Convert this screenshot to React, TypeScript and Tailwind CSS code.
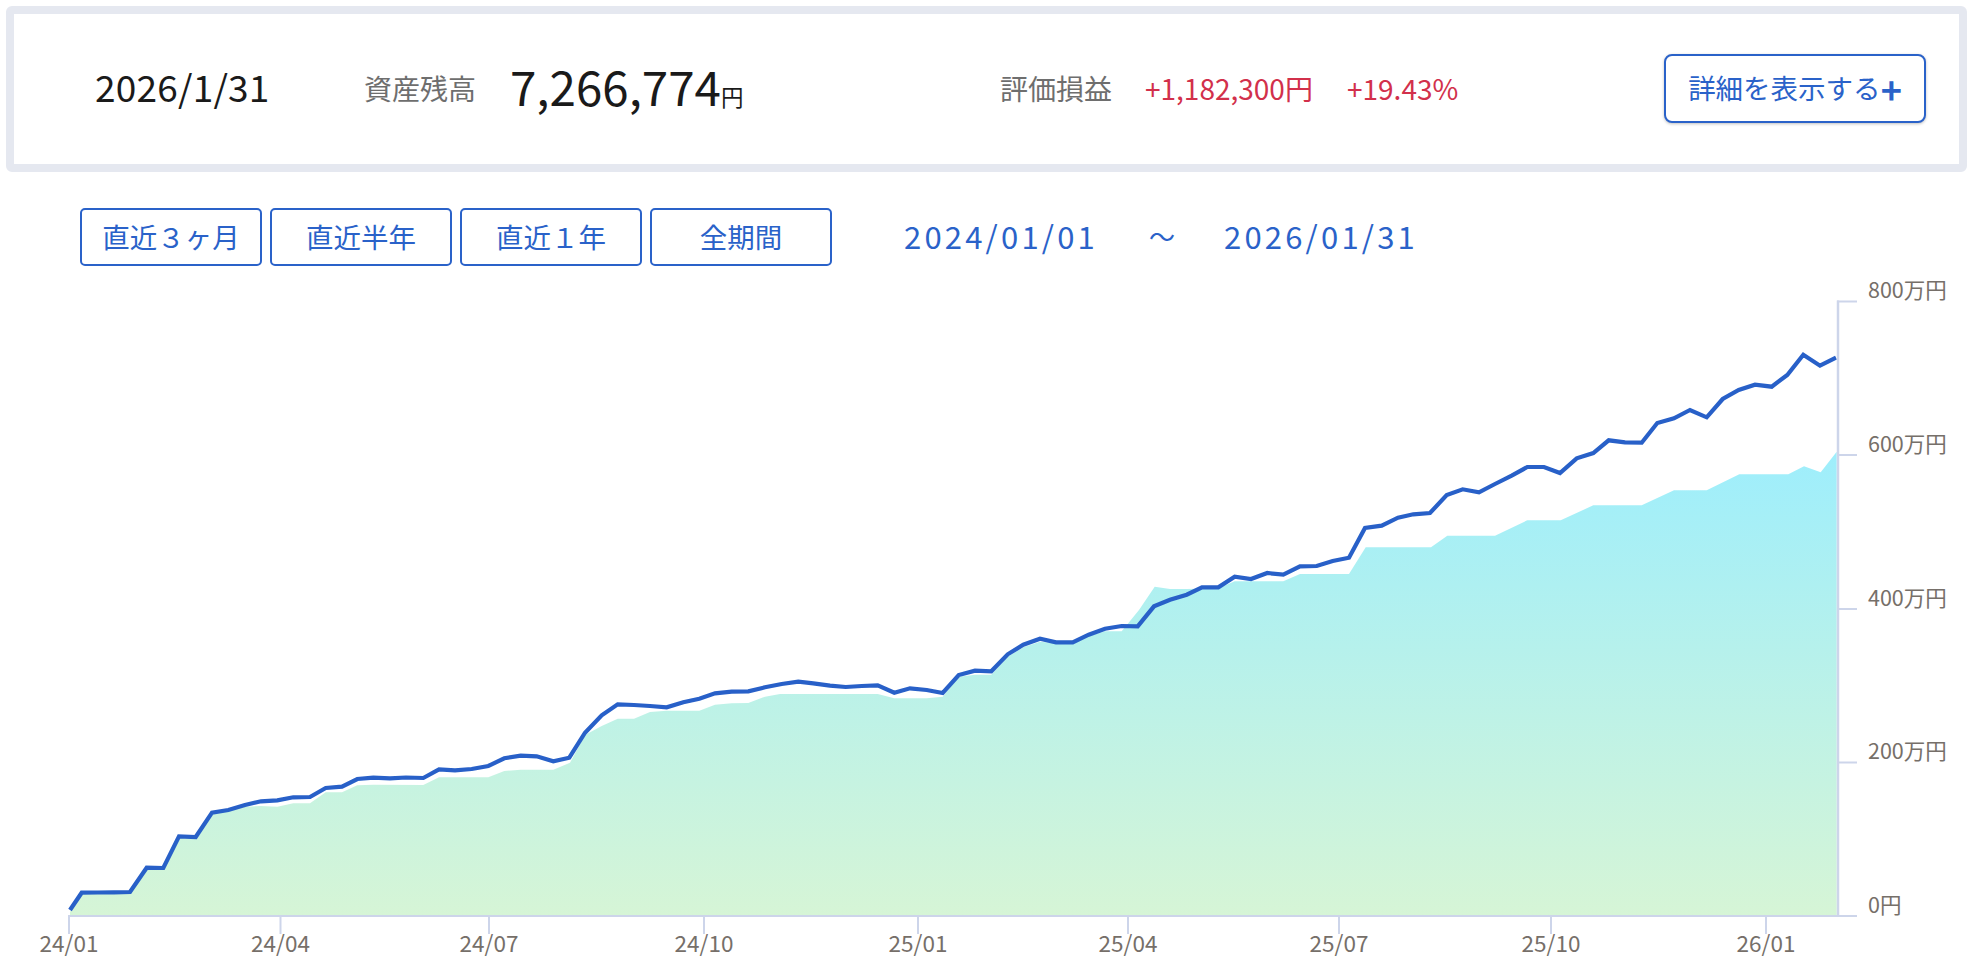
const linePoints =
  "70,910 81.7,892.7 97.9,892.5 114,892.3 130,892 146.7,867.7 163.3,868 179,836.3 195.7,837 212,812.7 228.3,810 245,805 261,801.3 277.3,800.3 293.3,797.3 310,797 325.7,788 342,786.7 357.3,779 373.3,777.7 390,778.3 406,777.5 423.3,778 439,769.3 455,770.3 471.7,769 488.3,766 504.3,758.3 520.7,755.7 536.7,756.3 553.3,761.3 569.3,757.7 585,732.7 601.7,715.3 617.7,704.3 634,705 650,706 666.7,707.3 683.3,702.3 699.3,698.7 715,693.3 731.7,691.7 748.3,691.3 765,687.3 781.7,684 798.3,681.7 813.3,683.3 830,685.7 845.7,687 861.7,686 877.7,685.3 894.3,692.7 910,688.3 926.7,690 942.7,693 958.7,675 975,670.7 991.3,671.3 1007.7,654.3 1023.3,644.7 1040,638.7 1056,642.3 1072.7,642.3 1088.7,634.7 1105,628.7 1121.7,626 1137.7,626.3 1154,606.3 1170,599.7 1186.7,594.7 1202,587.3 1218.3,587.3 1234.7,576.7 1251,579 1267.3,573 1283.3,574.7 1300,566.3 1316.7,566 1332.7,561 1349,557.7 1365,528 1381.7,525.7 1398,517.7 1413.3,514.3 1430,513 1446.7,495 1462.7,489.3 1479,492.3 1495,484 1511.7,475.7 1527.3,467 1544,467 1560,473 1576.7,458.3 1593.3,453 1608.7,440.3 1625,442.3 1641.7,442.7 1657.3,423 1674,418.3 1690,410 1706.7,417.3 1722.7,399 1738.7,390 1755,384.7 1771.7,386.7 1787.3,375 1803.3,354.7 1820,365.7 1836,357.7";

const areaPoints =
  "70,912 81.7,893.5 130,893.5 146.7,868.5 163.3,869 179,837.5 195.7,838 212,813.5 228.3,811 245,806.7 261,806 277.3,806.7 293.3,803.3 310,803.3 325.7,792.3 342,792.3 357.3,785.3 373.3,784.7 423.3,785 439,777.3 488.3,777.3 504.3,771 520.7,769.7 553.3,769.7 570,762.7 585,735 601.7,726 617.7,718.7 634,718.7 650,712 666.7,710.7 699.3,710.7 715,704.7 731.7,703.3 748.3,703 765,696.7 780,694 877.7,694 894.3,698.3 926.7,698.3 942.7,696.7 958.7,676.7 975,674.7 991.3,674.7 1007.7,656.7 1023.3,647.3 1040,641.7 1056,643.3 1072.7,643.3 1088.7,636 1105,631.3 1121.7,631.3 1139,610 1154.7,586.7 1170,589 1186.7,589 1218.3,588.3 1234.7,581.3 1283.3,581.3 1300,574 1349,574 1365.7,547.3 1431,547.3 1447.3,535.7 1495,535.7 1527.3,520.3 1560.7,520.3 1593.3,505.3 1641.7,505.3 1674,490.3 1706.7,490.3 1739.3,474.3 1788.3,474.3 1804,466.3 1820.7,472.3 1836.7,451.7 1836.7,916 70,916";

const yTicks = [
  { y: 301.5, label: "800万円" },
  { y: 455, label: "600万円" },
  { y: 609, label: "400万円" },
  { y: 762.5, label: "200万円" },
  { y: 916, label: "0円" },
];

const xTicks = [
  { x: 69, label: "24/01" },
  { x: 280.5, label: "24/04" },
  { x: 489, label: "24/07" },
  { x: 704, label: "24/10" },
  { x: 918, label: "25/01" },
  { x: 1128, label: "25/04" },
  { x: 1339, label: "25/07" },
  { x: 1551, label: "25/10" },
  { x: 1766, label: "26/01" },
];

const ranges = ["直近３ヶ月", "直近半年", "直近１年", "全期間"];

const App = () => {
  return (
    <div className="w-[1968px] h-[970px] overflow-hidden bg-white font-['Noto_Sans_CJK_JP','Noto_Sans',sans-serif]">
      <div className="ml-[6px] mt-[6px] w-[1961px] h-[166px] border-[8px] border-[#e5e8f0] rounded-[6px] bg-white flex items-center">
        <div className="ml-[81px] w-[269px] pb-[6px] text-[37px] tracking-[0.2px] leading-none text-[#1a1a1a]">2026/1/31</div>
        <div className="w-[146px] pb-[2px] text-[28px] leading-none text-[#6e6e6e]">資産残高</div>
        <div className="w-[490px] pb-[7px] flex items-baseline text-[#1a1a1a]">
          <span className="text-[47.5px] leading-none">7,266,774</span>
          <span className="text-[22.5px] leading-none">円</span>
        </div>
        <div className="w-[145px] pb-[2px] text-[28px] leading-none text-[#6e6e6e]">評価損益</div>
        <div className="w-[202px] pb-[2px] text-[28px] leading-none text-[#d2304b]">+1,182,300円</div>
        <div className="pb-[2px] text-[28px] leading-none text-[#d2304b]">+19.43%</div>
        <button className="ml-auto mr-[33px] mb-[2px] w-[262px] h-[69px] border-2 border-[#2a62c9] rounded-[8px] bg-white shadow-[0_1px_3px_rgba(0,0,0,0.25)] flex items-center justify-center text-[27.5px] leading-none text-[#2a62c9]">
          詳細を表示する
          <span className="font-bold text-[36px]">+</span>
        </button>
      </div>

      <div className="mt-[36px] ml-[80px] flex items-center h-[58px]">
        <div className="flex gap-[8px]">
          {ranges.map((r) => (
            <button
              key={r}
              className="w-[182px] h-[58px] pb-[1px] border-2 border-[#2a62c9] rounded-[5px] bg-white text-[27.5px] leading-none text-[#2a62c9]"
            >
              {r}
            </button>
          ))}
        </div>
        <div className="ml-[72px] w-[245px] pb-[3px] text-[31px] leading-none tracking-[3.2px] text-[#2a62c9]">2024/01/01</div>
        <div className="w-[75px] pb-[3px] text-[26px] leading-none text-[#2a62c9]">～</div>
        <div className="pb-[3px] text-[31px] leading-none tracking-[3.2px] text-[#2a62c9]">2026/01/31</div>
      </div>

      <svg viewBox="0 270 1968 700" className="block mt-[4px] w-[1968px] h-[700px]">
        <defs>
          <linearGradient id="assetFill" x1="0" y1="0" x2="0" y2="1">
            <stop offset="0" stopColor="#9eeefc" />
            <stop offset="1" stopColor="#d6f5d6" />
          </linearGradient>
        </defs>
        <polygon points={areaPoints} fill="url(#assetFill)" />
        <polyline points={linePoints} fill="none" stroke="#2860c8" strokeWidth="4.2" strokeLinejoin="miter" />

        <line x1="1838" y1="300.5" x2="1838" y2="917" stroke="#cdd5ea" strokeWidth="2.5" />
        <line x1="68" y1="916" x2="1857" y2="916" stroke="#cdd5ea" strokeWidth="2" />
        {yTicks.map((t) => (
          <g key={t.label}>
            <line x1="1837" y1={t.y} x2="1857" y2={t.y} stroke="#cdd5ea" strokeWidth="2" />
            <text x="1868" y={t.y - 3.5} className="text-[21.5px] fill-[#766f69]">
              {t.label}
            </text>
          </g>
        ))}
        {xTicks.map((t) => (
          <g key={t.label}>
            <line x1={t.x} y1="916" x2={t.x} y2="934" stroke="#cdd5ea" strokeWidth="2" />
            <text x={t.x} y="952" textAnchor="middle" className="text-[22.5px] fill-[#766f69]">
              {t.label}
            </text>
          </g>
        ))}
      </svg>
    </div>
  );
};

export default App;
